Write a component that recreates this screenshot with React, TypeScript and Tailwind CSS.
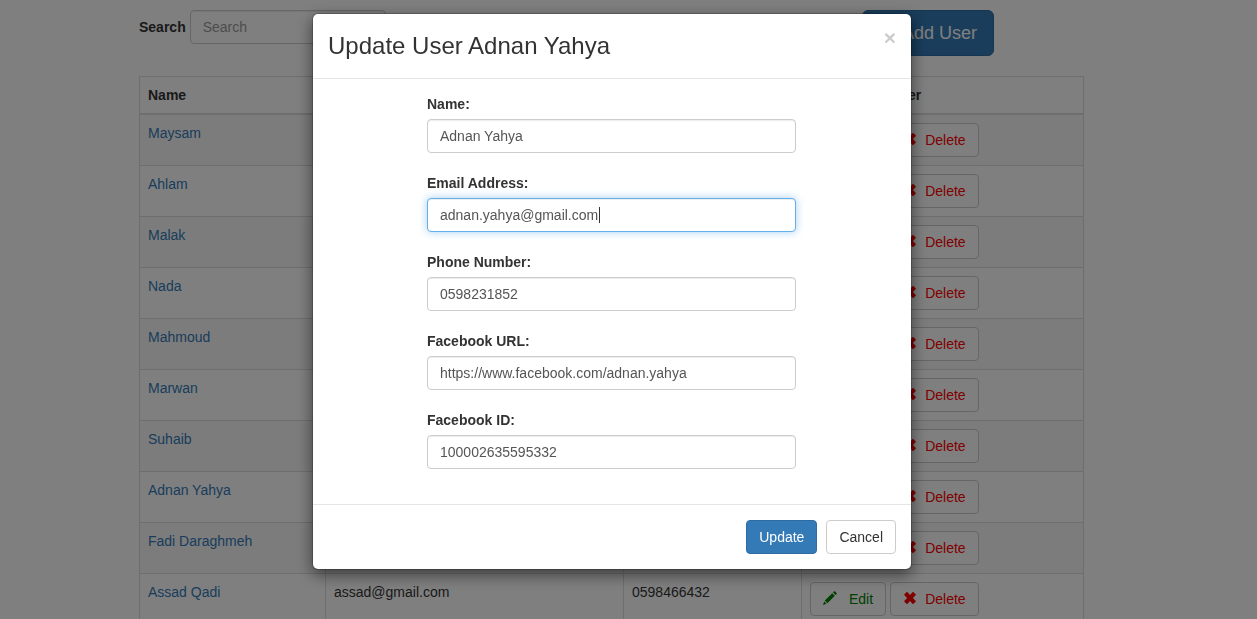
import { useState } from "react";

type User = { name: string; email: string; phone: string };

const users: User[] = [
  { name: "Maysam", email: "maysam@gmail.com", phone: "0598466401" },
  { name: "Ahlam", email: "ahlam@gmail.com", phone: "0598466402" },
  { name: "Malak", email: "malak@gmail.com", phone: "0598466403" },
  { name: "Nada", email: "nada@gmail.com", phone: "0598466404" },
  { name: "Mahmoud", email: "mahmoud@gmail.com", phone: "0598466405" },
  { name: "Marwan", email: "marwan@gmail.com", phone: "0598466406" },
  { name: "Suhaib", email: "suhaib@gmail.com", phone: "0598466407" },
  { name: "Adnan Yahya", email: "adnan.yahya@gmail.com", phone: "0598231852" },
  { name: "Fadi Daraghmeh", email: "fadi@gmail.com", phone: "0598466409" },
  { name: "Assad Qadi", email: "assad@gmail.com", phone: "0598466432" },
];

const fields = [
  { id: "name", label: "Name:", type: "text", value: "Adnan Yahya" },
  { id: "email", label: "Email Address:", type: "text", value: "adnan.yahya@gmail.com" },
  { id: "phone", label: "Phone Number:", type: "tel", value: "0598231852" },
  { id: "facebook-url", label: "Facebook URL:", type: "url", value: "https://www.facebook.com/adnan.yahya" },
  { id: "facebook-id", label: "Facebook ID:", type: "text", value: "100002635595332" },
];

const inputLook =
  "h-[34px] rounded border border-[#ccc] bg-white px-3 text-[#555] shadow-[inset_0_1px_1px_rgba(0,0,0,0.075)] outline-none placeholder:text-[#999] focus:border-[#66afe9] focus:shadow-[inset_0_1px_1px_rgba(0,0,0,0.075),0_0_8px_rgba(102,175,233,0.6)]";

function PencilIcon() {
  return (
    <svg viewBox="0 0 14 14" className="mb-[2px] size-[14px]" fill="currentColor" aria-hidden="true">
      <path d="M0 14 L1.2 10.4 L3.6 12.8 Z" />
      <path d="M1.8 9.6 L9.2 2.2 L11.8 4.8 L4.4 12.2 Z" />
      <path d="M10 1.4 L11 .4 Q11.5 0 12 .4 L13.6 2 Q14 2.5 13.6 3 L12.6 4 Z" />
    </svg>
  );
}

function RemoveIcon() {
  return (
    <svg viewBox="0 0 14 14" className="mb-[2px] size-[14px]" fill="currentColor" aria-hidden="true">
      <path d="M3.7 1 Q4 .8 4.3 1 L7 4 L9.7 1 Q10 .8 10.3 1 L12.8 3.4 Q13 3.7 12.8 4 L9.9 7 L12.8 10 Q13 10.3 12.8 10.6 L10.3 13 Q10 13.2 9.7 13 L7 10 L4.3 13 Q4 13.2 3.7 13 L1.2 10.6 Q1 10.3 1.2 10 L4.1 7 L1.2 4 Q1 3.7 1.2 3.4 Z" />
    </svg>
  );
}

function PlusIcon() {
  return (
    <svg viewBox="0 0 14 14" className="size-[18px]" fill="currentColor" aria-hidden="true">
      <path d="M5.4 1h3.2v4.4H13v3.2H8.6V13H5.4V8.6H1V5.4h4.4z" />
    </svg>
  );
}

function UserTable() {
  const cell = "border border-[#ddd] p-2 align-top text-left";
  const head = "border border-b-2 border-[#ddd] p-2 text-left font-bold";
  return (
    <table className="w-full table-fixed border-collapse">
      <colgroup>
        <col className="w-[186px]" />
        <col className="w-[298px]" />
        <col className="w-[178px]" />
        <col />
      </colgroup>
      <thead>
        <tr>
          <th className={head}>Name</th>
          <th className={head}>Email</th>
          <th className={head}>Phone</th>
          <th className={head}>Edit, Delete User</th>
        </tr>
      </thead>
      <tbody>
        {users.map((u) => (
          <tr key={u.name} className="odd:bg-[#f9f9f9]">
            <td className={cell}>
              <a href="#" className="text-[#337ab7]">{u.name}</a>
            </td>
            <td className={cell}>{u.email}</td>
            <td className={cell}>{u.phone}</td>
            <td className={cell}>
              <div className="flex gap-1">
                <button className="flex h-[34px] items-center gap-3 rounded border border-[#ccc] bg-white px-3 text-[#008000]">
                  <PencilIcon />
                  Edit
                </button>
                <button className="flex h-[34px] items-center gap-2 rounded border border-[#ccc] bg-white px-3 text-[#ff0000]">
                  <RemoveIcon />
                  Delete
                </button>
              </div>
            </td>
          </tr>
        ))}
      </tbody>
    </table>
  );
}

function UpdateDialog() {
  const [values, setValues] = useState<Record<string, string>>(
    Object.fromEntries(fields.map((f) => [f.id, f.value])),
  );
  const [edited, setEdited] = useState(false);
  return (
    <div
      role="dialog"
      aria-modal="true"
      aria-labelledby="dialog-title"
      className="w-full max-w-[600px] rounded-md border border-black/20 bg-white bg-clip-padding shadow-[0_5px_15px_rgba(0,0,0,0.5)]"
    >
      <header className="flex items-start justify-between border-b border-[#e5e5e5] p-[15px]">
        <h3 id="dialog-title" className="text-2xl leading-[34px] font-normal">
          Update User Adnan Yahya
        </h3>
        <button aria-label="Close" className="text-[21px] leading-[18px] font-bold text-[#ccc]">
          ×
        </button>
      </header>
      <form>
        <div className="flex flex-col gap-5 pt-[15px] pr-[115px] pb-[35px] pl-[114px]">
          {fields.map((f) => (
            <div key={f.id} className="flex flex-col gap-[5px]">
              <label htmlFor={f.id} className="font-bold">{f.label}</label>
              <div className="relative flex">
                <input
                  id={f.id}
                  type={f.type}
                  value={values[f.id]}
                  autoFocus={f.id === "email"}
                  onKeyDown={() => setEdited(true)}
                  onMouseDown={() => setEdited(true)}
                  onChange={(e) => setValues({ ...values, [f.id]: e.target.value })}
                  className={(edited ? "w-full " : "w-full caret-transparent ") + inputLook}
                />
                {f.id === "email" && !edited && (
                  <span className="pointer-events-none absolute top-[9px] left-[172px] h-4 w-px bg-[#333]" />
                )}
              </div>
            </div>
          ))}
        </div>
        <footer className="flex justify-end gap-[9px] border-t border-[#e5e5e5] p-[15px]">
          <button type="button" className="h-[34px] rounded border border-[#2e6da4] bg-[#337ab7] px-3 text-white">
            Update
          </button>
          <button type="button" className="h-[34px] rounded border border-[#ccc] bg-white px-3">
            Cancel
          </button>
        </footer>
      </form>
    </div>
  );
}

export default function App() {
  return (
    <div className="h-screen overflow-hidden bg-white font-['Liberation_Sans',Arial,sans-serif] text-sm leading-5 text-[#333]">
      <main className="pt-[10px] pr-[34px]">
        <div className="mx-auto flex max-w-[945px] flex-col gap-5">
          <div className="flex items-start justify-between pr-[90px]">
            <div className="flex items-center gap-1">
              <label htmlFor="search" className="font-bold">Search</label>
              <input id="search" type="text" placeholder="Search" className={"w-[196px] " + inputLook} />
            </div>
            <button className="flex h-[46px] items-center gap-[5px] rounded-md border border-[#2e6da4] bg-[#337ab7] px-4 text-lg text-white">
              <PlusIcon />
              Add User
            </button>
          </div>
          <UserTable />
        </div>
      </main>
      <div className="fixed inset-0 flex items-start justify-center bg-black/50 pt-[13px] pr-[33px]">
        <UpdateDialog />
      </div>
    </div>
  );
}
